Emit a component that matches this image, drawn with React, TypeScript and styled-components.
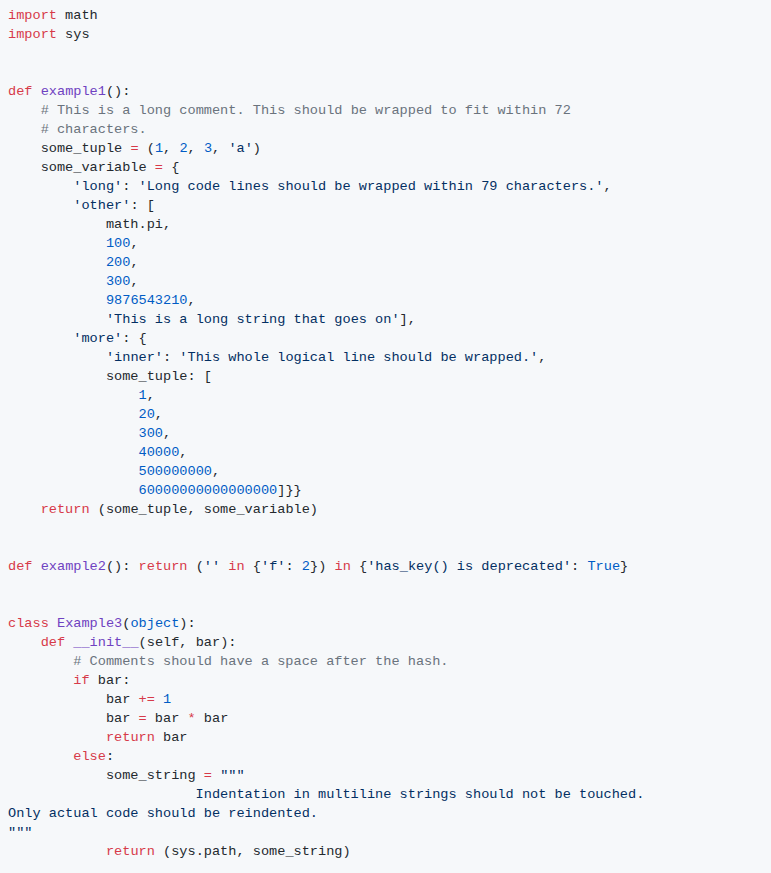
import React from "react";
import styled, { createGlobalStyle } from "styled-components";

const Global = createGlobalStyle`
  html, body { margin: 0; padding: 0; background: #f6f8fa; }
`;

type Kind = "plain" | "kw" | "fn" | "num" | "str" | "com" | "op";

const colors: Record<Kind, string> = {
  plain: "#24292e",
  kw: "#d73a49",
  fn: "#6f42c1",
  num: "#005cc5",
  str: "#032f62",
  com: "#6a737d",
  op: "#d73a49",
};

const CodeBlock = styled.pre`
  margin: 0;
  padding: 6px 8px 10px 8px;
  min-height: 873px;
  box-sizing: border-box;
  background: #f6f8fa;
  font-family: "Liberation Mono", monospace;
  font-size: 13.6px;
  line-height: 19px;
  color: #24292e;
  white-space: pre;
`;

const Line = styled.div`
  height: 19px;
`;

const Tok = styled.span<{ $kind: Kind }>`
  color: ${(p) => colors[p.$kind]};
`;

const source = `import math
import sys


def example1():
    # This is a long comment. This should be wrapped to fit within 72
    # characters.
    some_tuple = (1, 2, 3, 'a')
    some_variable = {
        'long': 'Long code lines should be wrapped within 79 characters.',
        'other': [
            math.pi,
            100,
            200,
            300,
            9876543210,
            'This is a long string that goes on'],
        'more': {
            'inner': 'This whole logical line should be wrapped.',
            some_tuple: [
                1,
                20,
                300,
                40000,
                500000000,
                60000000000000000]}}
    return (some_tuple, some_variable)


def example2(): return ('' in {'f': 2}) in {'has_key() is deprecated': True}


class Example3(object):
    def __init__(self, bar):
        # Comments should have a space after the hash.
        if bar:
            bar += 1
            bar = bar * bar
            return bar
        else:
            some_string = """
                       Indentation in multiline strings should not be touched.
Only actual code should be reindented.
"""
            return (sys.path, some_string)`;

const tokenRe =
  /(#.*$)|('[^']*'|""")|((?<=\b(?:def|class) )\w+)|(\b\d+\b)|(\b(?:import|def|return|in|class|if|else)\b)|(\b(?:True|object)\b)|(\+=|=|\*)/g;

function tokenize(line: string, inString: boolean): { toks: [Kind, string][]; inString: boolean } {
  const toks: [Kind, string][] = [];
  if (inString) {
    const end = line.indexOf('"""');
    if (end === -1) return { toks: [["str", line]], inString: true };
    toks.push(["str", line.slice(0, end + 3)]);
    const rest = tokenize(line.slice(end + 3), false);
    return { toks: toks.concat(rest.toks), inString: rest.inString };
  }
  let last = 0;
  let m: RegExpExecArray | null;
  tokenRe.lastIndex = 0;
  let open = false;
  while ((m = tokenRe.exec(line))) {
    if (m.index > last) toks.push(["plain", line.slice(last, m.index)]);
    let kind: Kind = "plain";
    if (m[1]) kind = "com";
    else if (m[2]) {
      kind = "str";
      if (m[2] === '"""') {
        toks.push(["str", line.slice(m.index)]);
        last = line.length;
        open = true;
        break;
      }
    } else if (m[3]) kind = "fn";
    else if (m[4]) kind = "num";
    else if (m[5]) kind = "kw";
    else if (m[6]) kind = "num";
    else if (m[7]) kind = "op";
    toks.push([kind, m[0]]);
    last = m.index + m[0].length;
  }
  if (last < line.length) toks.push(["plain", line.slice(last)]);
  return { toks, inString: open };
}

export default function App() {
  const lines = source.split("\n");
  let inString = false;
  const rendered = lines.map((l, i) => {
    const r = tokenize(l, inString);
    inString = r.inString;
    return (
      <Line key={i}>
        {r.toks.map(([k, t], j) => (
          <Tok key={j} $kind={k}>
            {t}
          </Tok>
        ))}
      </Line>
    );
  });
  return (
    <>
      <Global />
      <CodeBlock>{rendered}</CodeBlock>
    </>
  );
}
